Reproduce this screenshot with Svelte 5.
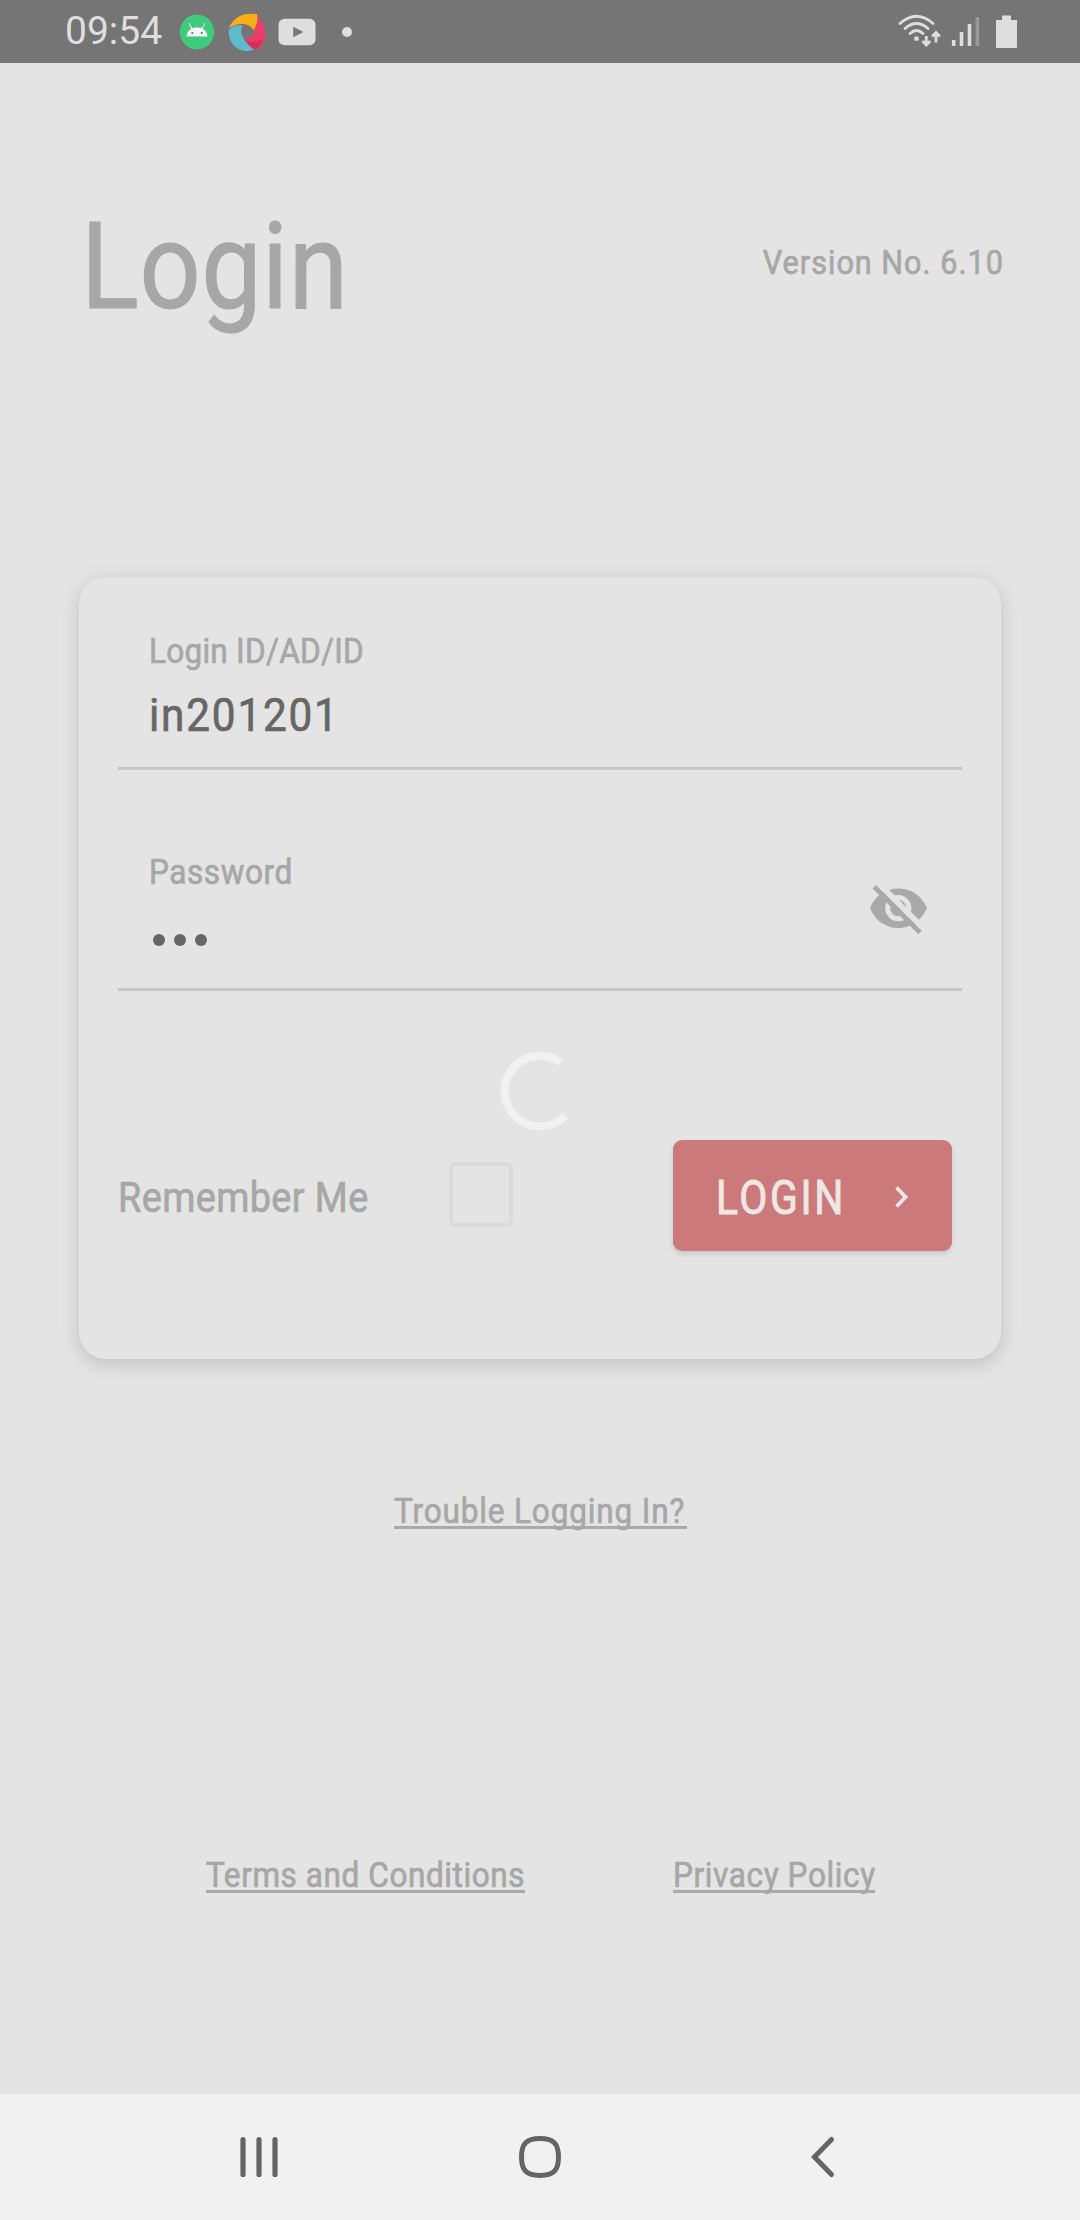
<script>
  let loginId = $state('in201201');
  const passwordDots = [0, 1, 2];
</script>

<div class="screen">
  <header class="status">
    <div class="group">
      <span class="time">09:54</span>
      <svg class="android" width="36" height="36" viewBox="0 0 36 36">
        <circle cx="18" cy="18" r="17.3" fill="#3ecb7b" />
        <path d="M7.5 22.5C8 16.5 12.5 13.2 18 13.2S28 16.5 28.500 22.500Z" fill="#f4f8f5" />
        <path d="M10.300 9.800l2.600 5M25.700 9.800l-2.600 5" stroke="#e6f4ea" stroke-width="1.200" stroke-linecap="round" />
        <circle cx="13.300" cy="19" r="1.100" fill="#557a63" />
        <circle cx="22.700" cy="19" r="1.100" fill="#557a63" />
      </svg>
      <svg class="swirl" width="40" height="40" viewBox="0 0 40 40">
        <path d="M1 18C4 14 9 12.500 14.500 13.500C11 20 14 28 26 37.500C12 43 -1 32 1 18Z" fill="#5fbcd0" />
        <path d="M29.500 4.500C38 12 40 27 34 33C31 37.500 27 38.500 24 36L15.500 27C22 29 27 23 26.500 16Z" fill="#ec3d68" />
        <path d="M15.500 27C21 31 29 30 35 27C34 34 28 39 24 36Z" fill="#d62f5d" />
        <path d="M.5 16.500C5 6 15 -.5 29 2.300C30 8 29 14 25.500 18C20 10 9 10.500 .5 16.500Z" fill="#f9ae17" />
      </svg>
      <svg class="video" width="38" height="28" viewBox="0 0 38 28">
        <rect x=".5" y=".8" width="37" height="26.400" rx="6" fill="#dedede" />
        <path d="M15.300 8.800V19.200L25.300 14Z" fill="#757575" />
      </svg>
      <i class="dot"></i>
    </div>
    <svg class="signals" width="120" height="36" viewBox="0 0 120 36" fill="none">
      <g stroke="#dedede" stroke-width="2.800" stroke-linecap="round">
        <path d="M2 9.500Q18.500 -5 35 9.500" />
        <path d="M7 14.500Q18.500 4.500 30 14.500" />
        <path d="M12 19.500Q18.500 13.500 25 19.500" />
      </g>
      <rect x="16.300" y="22.500" width="4.400" height="4.200" rx="1" fill="#dedede" />
      <path d="M28.300 22V31M24.500 27L28.300 31L32.200 27M38 28.500V19.500M34.200 22.500L38 18.500L41.800 22.500" stroke="#dedede" stroke-width="2.800" />
      <path d="M55.700 26V32M63.500 18V32M71.500 10V32" stroke="#dedede" stroke-width="3.600" />
      <path d="M79.300 3V32" stroke="#999" stroke-width="3.600" />
      <path d="M98 6H104V1.500H113V6H119V33Q119 34 118 34H99Q98 34 98 33Z" fill="#dedede" />
    </svg>
  </header>

  <main>
    <div class="heading">
      <h1>Login</h1>
      <span class="version">Version No. 6.10</span>
    </div>

    <section class="card">
      <div class="field">
        <div class="entry">
          <span class="label label-id">Login ID/AD/ID</span>
          <span class="value">{loginId}</span>
        </div>
      </div>

      <div class="field second">
        <div class="entry">
          <span class="label label-pass">Password</span>
          <div class="dots">
            {#each passwordDots as d (d)}<i></i>{/each}
          </div>
        </div>
        <svg class="eye" width="62" height="62" viewBox="0 0 62 62">
          <path d="M3 31C8 18.500 19 11.500 31.300 11.500S54.500 18.500 60 31C54.500 44 43.500 51 31.300 51S8 44 3 31Z" fill="#a9a9a9" />
          <circle cx="31.300" cy="31.200" r="10.600" fill="none" stroke="#e4e4e4" stroke-width="5" />
          <path d="M12 7L58 53" stroke="#e4e4e4" stroke-width="6" />
          <path d="M7.300 9.700L53 55.500" stroke="#a9a9a9" stroke-width="4.800" />
        </svg>
      </div>

      <div class="actions">
        <span class="remember">Remember Me</span>
        <span class="checkbox"></span>
        <button type="button">
          <span>LOGIN</span>
          <svg width="16" height="24" viewBox="0 0 16 24" fill="none">
            <path d="M2.500 2.500L11.500 12L2.500 21.500" stroke="#f3e4e3" stroke-width="3.800" />
          </svg>
        </button>
      </div>

      <svg class="spinner" width="80" height="80" viewBox="0 0 80 80" fill="none">
        <path d="M60.700 11.300A35.400 35.400 0 1 0 65.200 65" stroke="#f1f1f1" stroke-width="8" />
      </svg>
    </section>

    <div class="help"><a class="link trouble" href="#help"><span>Trouble Logging In?</span></a></div>

    <div class="legal">
      <a class="link terms" href="#terms"><span>Terms and Conditions</span></a>
      <a class="link privacy" href="#privacy"><span>Privacy Policy</span></a>
    </div>
  </main>

  <nav>
    <svg width="48" height="48" viewBox="0 0 48 48" fill="none" stroke="#646464" stroke-width="5.200" stroke-linecap="round">
      <path d="M8 6.500V41.500M24 6.500V41.500M40 6.500V41.500" />
    </svg>
    <svg width="48" height="48" viewBox="0 0 48 48" fill="none" stroke="#646464" stroke-width="5">
      <path d="M24 5.500C37.500 5.500 42.500 10.500 42.500 24S37.500 42.500 24 42.500S5.500 37.500 5.500 24S10.500 5.500 24 5.500Z" />
    </svg>
    <svg width="48" height="48" viewBox="0 0 48 48" fill="none" stroke="#646464" stroke-width="5" stroke-linecap="round">
      <path d="M34.500 6.500L17.500 24L34.500 41.500" />
    </svg>
  </nav>
</div>

<style>
  :global(body) { margin: 0; background: #e4e4e4; }

  .screen {
    width: 1080px;
    height: 2220px;
    display: flex;
    flex-direction: column;
    overflow: hidden;
    background: #e4e4e4;
    color: #a7a7a7;
    font-family: Roboto, "Liberation Sans", sans-serif;
  }
  svg { display: block; flex: none; }

  .status {
    box-sizing: border-box;
    height: 63px;
    flex: none;
    display: flex;
    justify-content: space-between;
    padding: 0 62px 0 65px;
    background: #757575;
  }
  .group { display: flex; align-items: center; }
  .time {
    width: 114px;
    color: #dedede;
    font-size: 39px;
    line-height: 69px;
  }
  .swirl { margin-left: 13px; }
  .video { margin-left: 10px; }
  .dot { width: 10px; height: 10px; margin-left: 26px; border-radius: 50%; background: #dedede; }
  .signals { margin-top: 14px; }

  main { flex: 1; display: flex; flex-direction: column; -webkit-text-stroke: .7px currentColor; }

  .heading {
    height: 370px;
    display: flex;
    justify-content: space-between;
    align-items: flex-start;
    padding: 144px 76px 0 81px;
    box-sizing: border-box;
    height: 514px;
  }
  h1 {
    margin: 0;
    font-size: 120px;
    line-height: 120px;
    font-weight: 400;
    letter-spacing: .6px;
    transform: scaleX(.895);
    transform-origin: left;
    -webkit-text-stroke: 1.2px currentColor;
  }
  .version {
    margin-top: 35px;
    font-size: 34px;
    line-height: 40px;
    letter-spacing: 1.1px;
    transform: scaleX(.9);
    transform-origin: right;
  }

  .card {
    position: relative;
    box-sizing: border-box;
    height: 782px;
    margin: 0 79px;
    padding: 54px 39px 0;
    border-radius: 27px;
    background: #e4e4e4;
    box-shadow: 0 7px 18px rgba(0, 0, 0, .11), 0 0 24px rgba(0, 0, 0, .05);
  }
  .field {
    box-sizing: border-box;
    height: 139px;
    display: flex;
    justify-content: space-between;
    padding-left: 31px;
    border-bottom: 3px solid #c6c6c6;
  }
  .second { margin-top: 82px; }
  .entry { display: flex; flex-direction: column; align-items: flex-start; }
  .label, .value, .remember, .link span {
    transform: scaleX(.9);
    transform-origin: left;
    white-space: nowrap;
  }
  .label { font-size: 35px; line-height: 42px; }
  .label-id { letter-spacing: .3px; }
  .label-pass { letter-spacing: .65px; }
  .value {
    margin-top: 14px;
    color: #666;
    font-size: 47px;
    line-height: 56px;
    letter-spacing: 2px;
  }
  .dots { display: flex; gap: 9px; margin: 40px 0 0 4px; }
  .dots i { width: 12px; height: 12px; border-radius: 50%; background: #666; }
  .eye { margin: 25px 33px 0 0; }

  .actions { display: flex; margin-top: 149px; }
  .remember {
    width: 331px;
    margin-top: 33px;
    font-size: 42px;
    line-height: 50px;
    letter-spacing: .45px;
  }
  .checkbox {
    box-sizing: border-box;
    width: 64px;
    height: 65px;
    margin-top: 22px;
    border: 4px solid #dbdbdb;
    border-radius: 6px;
  }
  button {
    box-sizing: border-box;
    width: 279px;
    height: 111px;
    display: flex;
    align-items: center;
    justify-content: space-between;
    margin: 0 0 0 160px;
    padding: 3px 42px 0 43px;
    border: 0;
    border-radius: 9px;
    background: #cb797b;
    color: #f0e6e4;
    font: 400 48px/56px Roboto, "Liberation Sans", sans-serif;
    letter-spacing: 3.1px;
    box-shadow: 0 3px 5px rgba(0, 0, 0, .12);
    -webkit-text-stroke: 1px currentColor;
  }
  button span { padding-top: 2px; transform: scaleX(.85); transform-origin: left; }
  .spinner { position: absolute; left: 421px; top: 474px; }

  .help { display: flex; justify-content: center; margin-top: 131px; }
  .link {
    box-sizing: border-box;
    height: 39px;
    display: block;
    border-bottom: 3px solid #a9a9a9;
    color: inherit;
    text-decoration: none;
    font-size: 35px;
    line-height: 43px;
  }
  .link span { display: inline-block; }
  .trouble { width: 293px; letter-spacing: .95px; }
  .terms { width: 319px; letter-spacing: .65px; }
  .privacy { width: 202px; letter-spacing: .7px; }
  .legal { display: flex; gap: 148px; margin: 325px 0 0 206px; }

  nav {
    height: 126px;
    flex: none;
    display: flex;
    align-items: center;
    justify-content: center;
    gap: 233px;
    background: #f1f1f1;
  }
</style>
